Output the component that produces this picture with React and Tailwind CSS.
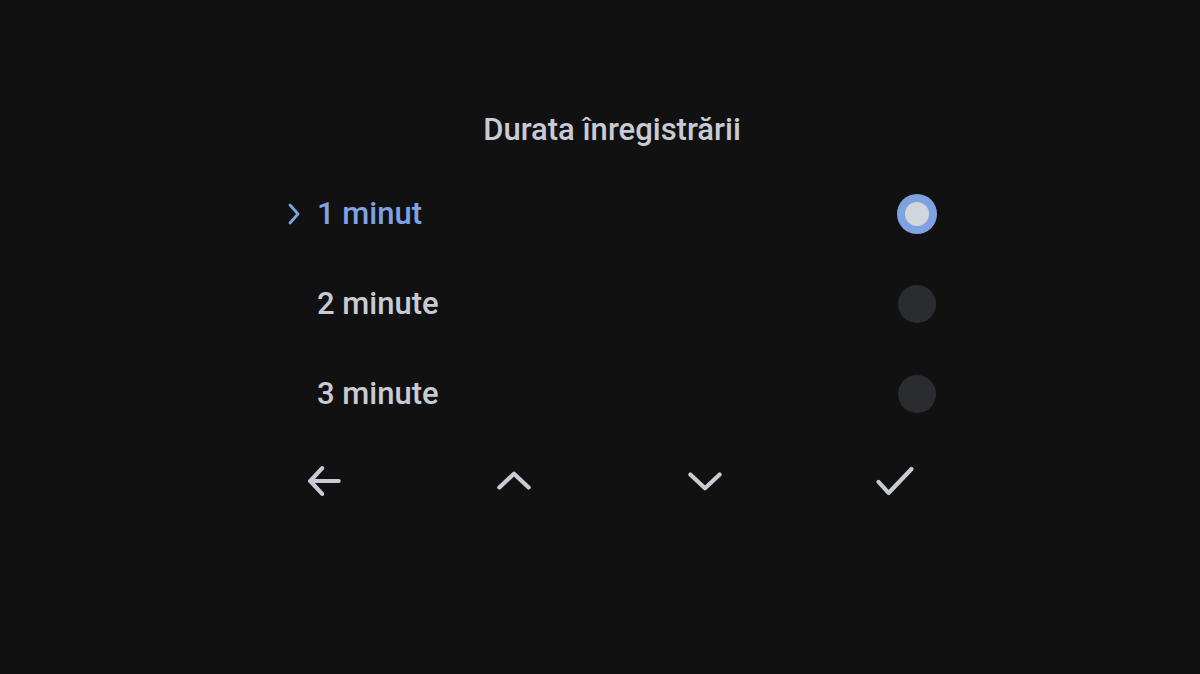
import React from "react";

const txt = "text-[#c9cbd4]";

function Radio({ selected }) {
  if (selected) {
    return (
      <div className="w-[40px] h-[40px] rounded-full bg-[#7fa2e2] flex items-center justify-center">
        <div className="w-[24px] h-[24px] rounded-full bg-[#d3d5dc]" />
      </div>
    );
  }
  return <div className="w-[38px] h-[38px] rounded-full bg-[#2a2c30]" />;
}

function Icon({ children }) {
  return (
    <svg width="44" height="44" viewBox="0 0 24 24" fill="none" stroke="#c9cbd4" strokeWidth="2.3" strokeLinecap="round" strokeLinejoin="round">
      {children}
    </svg>
  );
}

export default function App() {
  const rows = [
    { label: "1 minut", selected: true },
    { label: "2 minute", selected: false },
    { label: "3 minute", selected: false },
  ];
  return (
    <div className="w-[1200px] h-[674px] bg-[#111112] overflow-hidden" style={{ fontFamily: "Roboto, 'Noto Sans', sans-serif" }}>
      <div className="w-[654px] ml-[285px] pt-[110px] flex flex-col">
        <div className={`h-[40px] flex items-center justify-center text-[31px] font-medium ${txt}`}>
          Durata înregistrării
        </div>
        <div className="mt-[19px] flex flex-col">
          {rows.map((r) => (
            <div key={r.label} className="h-[90px] flex items-center justify-between">
              <div className="flex items-center">
                <div className="w-[32px] flex items-center">
                  {r.selected && (
                    <svg width="18" height="26" viewBox="0 0 18 26" fill="none" stroke="#7fa2e2" strokeWidth="2.8" strokeLinecap="round" strokeLinejoin="round">
                      <path d="M5 4 L13 13 L5 22" />
                    </svg>
                  )}
                </div>
                <span className={`text-[31px] font-medium ${r.selected ? "text-[#7fa2e2]" : txt}`}>{r.label}</span>
              </div>
              <div className="w-[40px] flex justify-center mr-[2px]">
                <Radio selected={r.selected} />
              </div>
            </div>
          ))}
        </div>
        <div className="mt-[20px] h-[44px] flex items-center justify-between pl-[17px] pr-[22px]">
          <Icon>
            <path d="M20 12 H4.5" />
            <path d="M11 5 L4.5 12 L11 19" />
          </Icon>
          <Icon>
            <path d="M4 15.5 L12 8 L20 15.5" />
          </Icon>
          <Icon>
            <path d="M4 8.5 L12 16 L20 8.5" />
          </Icon>
          <Icon>
            <path d="M3 12.5 L8.5 18.5 L21 5.5" />
          </Icon>
        </div>
      </div>
    </div>
  );
}
